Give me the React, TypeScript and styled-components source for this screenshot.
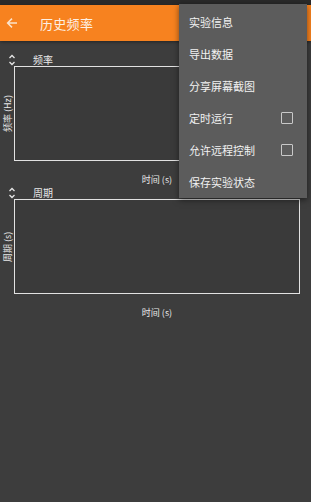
import React from 'react'
import styled, { createGlobalStyle } from 'styled-components'

const GlobalStyle = createGlobalStyle`
  html, body {
    margin: 0;
    padding: 0;
    background: #3d3d3d;
  }
  body {
    font-family: "Noto Sans CJK SC", "Noto Sans", Roboto, sans-serif;
    color: #eeeeee;
  }
`

const graphs = [
  { title: '频率', yLabel: '频率 (Hz)', xLabel: '时间 (s)' },
  { title: '周期', yLabel: '周期 (s)', xLabel: '时间 (s)' },
]

const menuItems = [
  { label: '实验信息' },
  { label: '导出数据' },
  { label: '分享屏幕截图' },
  { label: '定时运行', check: true },
  { label: '允许远程控制', check: true },
  { label: '保存实验状态' },
]

const BackIcon = () => (
  <svg width="12" height="12" viewBox="0 0 12 12">
    <path d="M11 6H1.8M6 1.6L1.6 6L6 10.4" stroke="#fbe3cc" strokeWidth="1.5" fill="none" />
  </svg>
)

const ExpandIcon = () => (
  <svg width="8" height="12" viewBox="0 0 8 12">
    <path d="M1.5 4L4 1.5L6.5 4M1.5 8L4 10.5L6.5 8" stroke="#e6e6e6" strokeWidth="1.3" fill="none" />
  </svg>
)

const App = () => {
  return (
    <Page>
      <GlobalStyle />
      <StatusBar />
      <AppBar>
        <BackButton>
          <BackIcon />
        </BackButton>
        <Title>历史频率</Title>
      </AppBar>
      <Content>
        {graphs.map((g) => (
          <GraphBlock key={g.title}>
            <GraphHeader>
              <ExpandSlot>
                <ExpandIcon />
              </ExpandSlot>
              <GraphTitle>{g.title}</GraphTitle>
            </GraphHeader>
            <PlotRow>
              <YLabel>{g.yLabel}</YLabel>
              <Plot />
            </PlotRow>
            <XLabel>{g.xLabel}</XLabel>
          </GraphBlock>
        ))}
      </Content>
      <Menu>
        {menuItems.map((m) => (
          <MenuItem key={m.label}>
            <span>{m.label}</span>
            {m.check && <CheckBox />}
          </MenuItem>
        ))}
      </Menu>
    </Page>
  )
}

export default App

const Page = styled.div`
  position: relative;
  width: 311px;
  height: 502px;
  overflow: hidden;
  background: #3d3d3d;
`

const StatusBar = styled.div`
  height: 5px;
  background: #2a2a2a;
`

const AppBar = styled.div`
  height: 36px;
  background: #f7821f;
  display: flex;
  align-items: center;
  box-shadow: 0 1px 3px rgba(0, 0, 0, 0.4);
`

const BackButton = styled.div`
  width: 24px;
  padding-left: 6px;
  display: flex;
  align-items: center;
`

const Title = styled.div`
  margin-left: 10px;
  font-size: 13px;
  color: #fdf0e4;
  letter-spacing: 0.3px;
`

const Content = styled.div`
  padding-top: 12px;
`

const GraphBlock = styled.div`
  display: flex;
  flex-direction: column;
`

const GraphHeader = styled.div`
  height: 13px;
  display: flex;
  align-items: center;
`

const ExpandSlot = styled.div`
  width: 8px;
  margin-left: 8px;
  display: flex;
`

const GraphTitle = styled.div`
  margin-left: 17px;
  font-size: 10px;
  line-height: 13px;
  color: #e8e8e8;
`

const PlotRow = styled.div`
  display: grid;
  grid-template-columns: 14px 286px;
  height: 95px;
`

const YLabel = styled.div`
  writing-mode: vertical-rl;
  text-orientation: sideways;
  transform: rotate(180deg);
  font-size: 9px;
  color: #e8e8e8;
  display: flex;
  align-items: center;
  justify-content: center;
  white-space: nowrap;
`

const Plot = styled.div`
  border: 1.5px solid #e2e2e2;
  background: #3a3a3a;
  box-sizing: border-box;
`

const XLabel = styled.div`
  width: 286px;
  margin-left: 14px;
  padding-top: 13px;
  height: 25px;
  box-sizing: border-box;
  text-align: center;
  font-size: 9px;
  line-height: 12px;
  color: #e8e8e8;
`

const Menu = styled.div`
  position: absolute;
  top: 4px;
  left: 179px;
  width: 128px;
  padding-top: 2px;
  background: #5c5c5c;
  box-shadow: 0 2px 6px rgba(0, 0, 0, 0.5);
`

const MenuItem = styled.div`
  height: 32px;
  display: flex;
  align-items: center;
  justify-content: space-between;
  padding: 0 14px 0 10px;
  font-size: 11px;
  color: #f2f2f2;
`

const CheckBox = styled.div`
  width: 10px;
  height: 10px;
  border: 1.5px solid #c8c8c8;
  border-radius: 1px;
`
